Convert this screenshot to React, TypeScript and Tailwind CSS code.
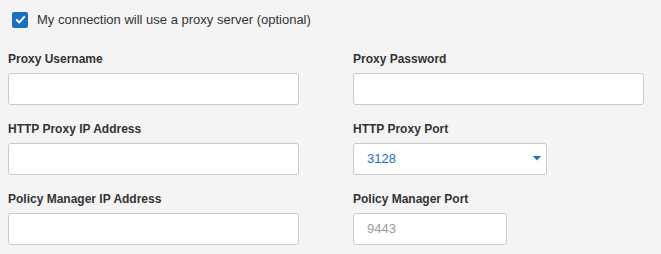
import React from "react";

function Field({ label, children }: { label: string; children: React.ReactNode }) {
  return (
    <div className="flex flex-col">
      <div className="h-[22px] text-[12px] font-bold leading-[22px] text-[#333]">{label}</div>
      <div className="mt-[3px]">{children}</div>
    </div>
  );
}

function TextBox({ w, placeholder }: { w: string; placeholder?: string }) {
  return (
    <div className={`${w} h-[32px] rounded-[3px] border border-[#cbcbcb] bg-white px-[13px] text-[13px] leading-[30px] text-[#9a9a9a]`}>
      {placeholder}
    </div>
  );
}

export default function App() {
  return (
    <div className="h-[254px] w-[661px] bg-[#f4f4f4] pl-[8px] pt-[10px]" style={{ fontFamily: '"Liberation Sans", Arial, sans-serif' }}>
      <div className="flex items-center pl-[4px]">
        <div className="flex h-[16px] w-[16px] items-center justify-center rounded-[2px] bg-[#1a6fc4]">
          <svg width="11" height="9" viewBox="0 0 11 9">
            <path d="M1.2 4.6 L4.2 7.4 L9.8 1.4" fill="none" stroke="white" strokeWidth="2" />
          </svg>
        </div>
        <span className="ml-[9px] text-[13px] text-[#333]">My connection will use a proxy server (optional)</span>
      </div>
      <div className="mt-[18px] grid grid-cols-[345px_1fr] gap-y-[13px]">
        <Field label="Proxy Username"><TextBox w="w-[291px]" /></Field>
        <Field label="Proxy Password"><TextBox w="w-[291px]" /></Field>
        <Field label="HTTP Proxy IP Address"><TextBox w="w-[291px]" /></Field>
        <Field label="HTTP Proxy Port">
          <div className="flex h-[32px] w-[194px] items-center justify-between rounded-[3px] border border-[#cbcbcb] bg-white pl-[13px] pr-[5px]">
            <span className="text-[13px] text-[#1a6fc4]">3128</span>
            <svg width="8" height="5" viewBox="0 0 8 5">
              <path d="M0 0 L8 0 L4 4.5 Z" fill="#1a6fc4" />
            </svg>
          </div>
        </Field>
        <Field label="Policy Manager IP Address"><TextBox w="w-[291px]" /></Field>
        <Field label="Policy Manager Port"><TextBox w="w-[154px]" placeholder="9443" /></Field>
      </div>
    </div>
  );
}
